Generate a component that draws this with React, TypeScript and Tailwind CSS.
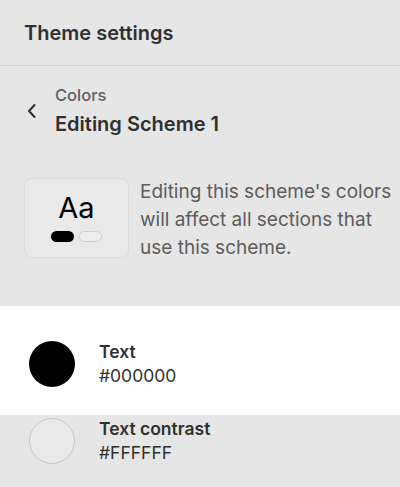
import React from 'react';

const ColorRow: React.FC<{ label: string; value: string; swatch: string; active?: boolean }> = ({ label, value, swatch, active }) => (
  <div className={active ? 'flex items-center bg-white pl-[29px] pt-[34px] pb-[27px]' : 'flex items-center pl-[29px] pt-[2px]'}>
    <div className={`h-[46px] w-[46px] shrink-0 rounded-full ${swatch}`} />
    <div className="ml-[24px] flex flex-col">
      <span className="text-[17.5px] leading-[24px] font-semibold text-[#303030]">{label}</span>
      <span className="text-[17.5px] leading-[24px] text-[#303030]">{value}</span>
    </div>
  </div>
);

export default function App() {
  return (
    <div className="h-[487px] w-[400px] overflow-hidden bg-[#e6e6e6] font-['Inter',sans-serif] text-[#303030]">
      <div className="flex h-[66px] items-center border-b border-[#d4d4d4] px-6">
        <h1 className="text-[20px] font-semibold">Theme settings</h1>
      </div>

      <div className="flex items-center pl-[27px] pt-[18px]">
        <svg width="10" height="16" viewBox="0 0 10 16" fill="none" stroke="#303030" strokeWidth="2" strokeLinecap="round" strokeLinejoin="round">
          <path d="M7.5 2 2 8l5.5 6" />
        </svg>
        <div className="ml-[18px] flex flex-col">
          <span className="text-[16.5px] leading-[22px] font-medium text-[#616161]">Colors</span>
          <span className="mt-[4px] text-[20px] leading-[28px] font-semibold">Editing Scheme 1</span>
        </div>
      </div>

      <div className="flex items-start gap-[11px] pl-6 pr-1 pt-[40px]">
        <div className="flex h-[80px] w-[105px] shrink-0 flex-col items-center justify-center rounded-lg border border-[#dcdcdc] bg-[#e9e9e9]">
          <span className="text-[29px] leading-[28px] text-black">Aa</span>
          <div className="mt-[9px] flex gap-[5px]">
            <div className="h-[11px] w-[23px] rounded-full bg-black" />
            <div className="h-[11px] w-[23px] rounded-full border border-[#cfcfcf] bg-[#ededed]" />
          </div>
        </div>
        <p className="text-[19px] leading-[28px] text-[#5c5c5c]">
          Editing this scheme's colors will affect all sections that use this scheme.
        </p>
      </div>

      <div className="mt-[44px]">
        <ColorRow label="Text" value="#000000" swatch="bg-black" active />
        <ColorRow label="Text contrast" value="#FFFFFF" swatch="border border-[#c4c4c4] bg-[#e9e9e9]" />
      </div>
    </div>
  );
}
